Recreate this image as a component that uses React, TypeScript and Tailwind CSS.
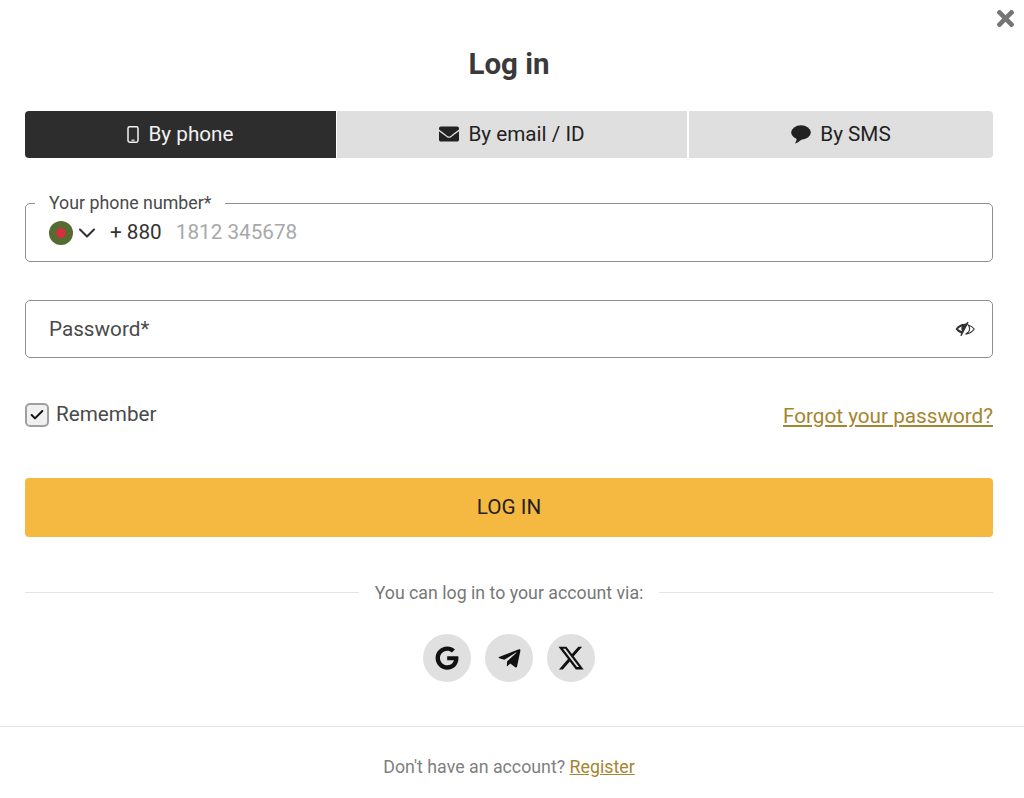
import { FC, ReactNode } from 'react'
import { Check, ChevronDown } from 'lucide-react'
import { FaEnvelope, FaGoogle, FaTelegramPlane, FaTimes } from 'react-icons/fa'
import { FaXTwitter } from 'react-icons/fa6'

interface TabProps {
    icon: ReactNode;
    label: string;
    className: string;
}

const PhoneIcon = () => (
    <svg width="12" height="17" viewBox="0 0 12 17" fill="none">
        <rect x="1" y="0.8" width="10" height="15.4" rx="1.6" stroke="currentColor" strokeWidth="1.5" />
        <rect x="4.5" y="13.6" width="3" height="1.2" fill="currentColor" />
    </svg>
)

const ChatIcon = () => (
    <svg width="20" height="19" viewBox="0 0 20 19" fill="currentColor">
        <ellipse cx="10" cy="7.5" rx="9.8" ry="7.2" />
        <path d="M5 12 L5.6 15 L4 18.6 C7 17.6 9.5 15.8 11 13.8 Z" />
    </svg>
)

const EyeIcon = () => (
    <svg width="20" height="16" viewBox="0 0 20 16" fill="none">
        <path d="M0.6 8 C2.6 4.6 6 2.6 10.4 2.7 L12.9 0.7 L13.6 1.6 L6.6 15 L5.2 14.4 L6.3 12.4 C4 11.6 2 10.2 0.6 8 Z" fill="#333" />
        <path d="M13.2 4 C15.8 4.9 17.8 6.2 19.2 8 C17.4 10.8 14.6 12.6 10.6 13.1 C13.4 11.6 14.6 10 14.6 8 C14.6 6.4 14.2 5.2 13.2 4 Z" stroke="#333" strokeWidth="1.1" />
        <path d="M3 8 C4.2 6.8 5.4 6 6.8 5.6 C6 7.2 6.2 9 7.2 10.2 C5.6 9.8 4.2 9 3 8 Z" fill="#fff" />
    </svg>
)

const Tab: FC<TabProps> = ({ icon, label, className }) => {
    return (
        <div className={`flex items-center justify-center gap-[9px] h-[47px] text-[20.7px] leading-[46px] pb-[1px] ${className}`}>
            {icon}
            <span>{label}</span>
        </div>
    )
}

const SocialButton: FC<{ children: ReactNode }> = ({ children }) => {
    return (
        <div className="w-[48px] h-[48px] rounded-full bg-[#e0e0e0] flex items-center justify-center text-[#111]">
            {children}
        </div>
    )
}

export default function App() {
    return (
        <div className="relative w-[1024px] h-[798px] bg-white overflow-hidden text-[#3a3a3a] font-['Roboto',sans-serif]">
            <button className="absolute top-[6px] right-[6px] text-[#757575]">
                <FaTimes size={25} />
            </button>

            <div className="pl-[25px] pr-[31px]">
                <h1 className="pt-[46px] h-[111px] text-center text-[29.5px] leading-[36px] font-bold text-[#3a3a3a]">Log in</h1>

                <div className="flex gap-[1px] text-[#222]">
                    <Tab className="w-[311px] bg-[#2d2d2d] text-[#f2f2f2] rounded-l-[4px]" icon={<PhoneIcon />} label="By phone" />
                    <Tab className="w-[350px] bg-[#dfdfdf]" icon={<FaEnvelope size={20} />} label="By email / ID" />
                    <Tab className="flex-1 ml-[1px] bg-[#dfdfdf] rounded-r-[4px]" icon={<ChatIcon />} label="By SMS" />
                </div>

                <div className="relative mt-[45px] h-[59px] border border-[#8f8f8f] rounded-[5px] flex items-center pl-[23px] text-[20.7px] leading-[26px]">
                    <span className="absolute -top-[12px] left-[9px] bg-white px-[14px] text-[17.8px] leading-[22px] text-[#4a4a4a]">Your phone number*</span>
                    <span className="w-[24px] h-[24px] rounded-full bg-[#556b2f] flex items-center justify-center">
                        <span className="w-[10px] h-[10px] rounded-full bg-[#d32f3f]" />
                    </span>
                    <ChevronDown size={28} strokeWidth={1.8} className="text-[#333]" />
                    <span className="ml-[9px] pb-[2px] text-[#333]">+ 880</span>
                    <span className="ml-[14px] pb-[2px] text-[#a8a8a8]">1812 345678</span>
                </div>

                <div className="mt-[38px] h-[58px] border border-[#8f8f8f] rounded-[5px] flex items-center justify-between pl-[23px] pr-[17px] text-[20.7px] leading-[26px] text-[#4a4a4a]">
                    <span>Password*</span>
                    <EyeIcon />
                </div>

                <div className="mt-[45px] h-[24px] flex items-center justify-between">
                    <div className="flex items-center gap-[7px] text-[20.7px] leading-[24px] text-[#4a4a4a]">
                        <span className="w-[24px] h-[24px] rounded-[5px] border-2 border-[#a0a0a0] bg-[#f0f0f0] flex items-center justify-center">
                            <Check size={16} strokeWidth={3} className="text-[#111]" />
                        </span>
                        <span className="pb-[2px]">Remember</span>
                    </div>
                    <a className="text-[20.7px] leading-[24px] text-[#a5852f] underline pt-[1px]">Forgot your password?</a>
                </div>

                <button className="mt-[51px] w-full h-[59px] bg-[#f5b942] rounded-[4px] text-[20.7px] leading-[26px] pb-[1px] text-[#222] flex items-center justify-center">
                    LOG IN
                </button>

                <div className="mt-[44px] h-[22px] flex items-center gap-[16px]">
                    <div className="flex-1 h-[1px] bg-[#e4e4e4]" />
                    <span className="pt-[2px] text-[17.75px] text-[#777]">You can log in to your account via:</span>
                    <div className="flex-1 h-[1px] bg-[#e4e4e4]" />
                </div>

                <div className="mt-[31px] flex justify-center gap-[14px]">
                    <SocialButton><FaGoogle size={24} /></SocialButton>
                    <SocialButton><FaTelegramPlane size={25} /></SocialButton>
                    <SocialButton><FaXTwitter size={28} /></SocialButton>
                </div>
            </div>

            <div className="mt-[44px] border-t border-[#e4e4e4] pt-[29px] pl-[25px] pr-[31px] text-center text-[17.8px] leading-[22px] text-[#808080]">
                Don't have an account? <a className="text-[#a5852f] underline">Register</a>
            </div>
        </div>
    )
}
